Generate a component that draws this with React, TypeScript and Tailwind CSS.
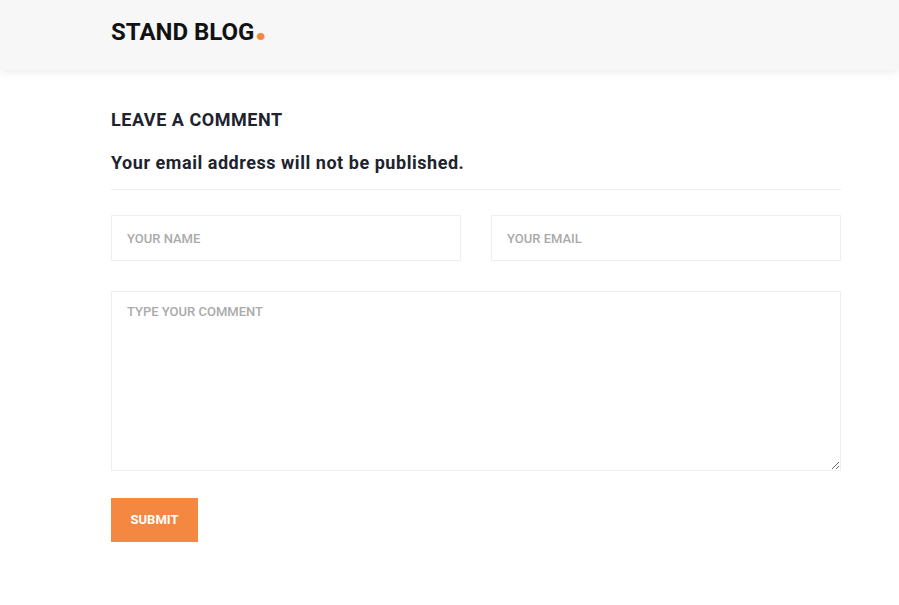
export default function App() {
  return (
    <div className="min-h-screen bg-white font-['Roboto',sans-serif]">
      <header className="h-[70px] bg-[#f7f7f7] pr-[58px] pl-[111px] shadow-[0_1px_10px_rgba(0,0,0,0.1)]">
        <a href="#" className="inline-block pt-[14px] text-[24px] leading-[36px] font-bold text-[#121212] uppercase">
          Stand Blog<em className="text-[42px] leading-0 font-black text-[#f48840] not-italic">.</em>
        </a>
      </header>
      <main className="pt-[38px] pr-[58px] pl-[111px]">
        <h2 className="text-[18px] leading-[24px] font-bold tracking-[0.03em] text-[#20232e] uppercase">Leave a comment</h2>
        <h4 className="mt-[19px] border-b border-[#eee] pb-[14px] text-[18px] leading-[24px] font-bold tracking-[0.03em] text-[#20232e]">
          Your email address will not be published.
        </h4>
        <form className="pt-[25px]" onSubmit={(event) => event.preventDefault()}>
          <div className="grid grid-cols-2 gap-[30px]">
            <input
              type="text"
              aria-label="Your name"
              placeholder="YOUR NAME"
              className="h-[46px] w-full border border-[#eee] px-[15px] text-[13px] font-medium text-[#7a7a7a] outline-none placeholder:text-[#aaa]"
            />
            <input
              type="email"
              aria-label="Your email"
              placeholder="YOUR EMAIL"
              className="h-[46px] w-full border border-[#eee] px-[15px] text-[13px] font-medium text-[#7a7a7a] outline-none placeholder:text-[#aaa]"
            />
          </div>
          <textarea
            aria-label="Type your comment"
            placeholder="TYPE YOUR COMMENT"
            className="mt-[30px] block h-[180px] w-full border border-[#eee] px-[15px] py-[10px] text-[13px] leading-[20px] font-medium text-[#7a7a7a] outline-none placeholder:text-[#aaa]"
          />
          <button
            type="submit"
            className="mt-[27px] block h-[44px] w-[87px] bg-[#f48840] text-[13px] font-bold text-white uppercase"
          >
            Submit
          </button>
        </form>
      </main>
    </div>
  );
}
